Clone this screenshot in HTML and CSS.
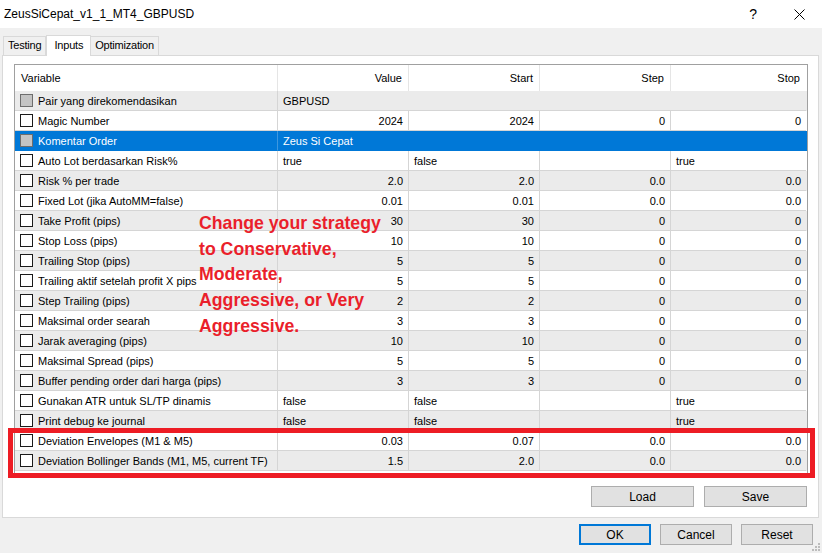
FILE: index.html
```html
<!DOCTYPE html>
<html lang="en">
<head>
  <meta charset="UTF-8" />
  <title>ZeusSiCepat_v1_1_MT4_GBPUSD</title>
  <link rel="stylesheet" href="styles.css">
</head>
<body>

  <div class="titlebar">
    <span class="title">ZeusSiCepat_v1_1_MT4_GBPUSD</span>
    <span class="help">?</span>
    <span class="close">
      <svg width="11" height="11" viewBox="0 0 11 11"><path d="M0.5 0.5 L10.5 10.5 M10.5 0.5 L0.5 10.5" stroke="#000" stroke-width="1" fill="none"/></svg>
    </span>
  </div>

  <div class="tabs">
    <div class="tab">Testing</div>
    <div class="tab active">Inputs</div>
    <div class="tab">Optimization</div>
  </div>

  <div class="panel">
    <div class="list">
      <div class="row head">
        <div class="cell">Variable</div>
        <div class="cell num">Value</div>
        <div class="cell num">Start</div>
        <div class="cell num">Step</div>
        <div class="cell num">Stop</div>
      </div>

      <div class="row alt">
        <div class="cell name"><span class="check off"></span>Pair yang direkomendasikan</div>
        <div class="cell span">GBPUSD</div>
      </div>
      <div class="row">
        <div class="cell name"><span class="check"></span>Magic Number</div>
        <div class="cell num">2024</div><div class="cell num">2024</div><div class="cell num">0</div><div class="cell num">0</div>
      </div>
      <div class="row selected">
        <div class="cell name"><span class="check off"></span>Komentar Order</div>
        <div class="cell span">Zeus Si Cepat</div>
      </div>
      <div class="row">
        <div class="cell name"><span class="check"></span>Auto Lot berdasarkan Risk%</div>
        <div class="cell">true</div><div class="cell">false</div><div class="cell"></div><div class="cell">true</div>
      </div>
      <div class="row alt">
        <div class="cell name"><span class="check"></span>Risk % per trade</div>
        <div class="cell num">2.0</div><div class="cell num">2.0</div><div class="cell num">0.0</div><div class="cell num">0.0</div>
      </div>
      <div class="row">
        <div class="cell name"><span class="check"></span>Fixed Lot (jika AutoMM=false)</div>
        <div class="cell num">0.01</div><div class="cell num">0.01</div><div class="cell num">0.0</div><div class="cell num">0.0</div>
      </div>
      <div class="row alt">
        <div class="cell name"><span class="check"></span>Take Profit (pips)</div>
        <div class="cell num">30</div><div class="cell num">30</div><div class="cell num">0</div><div class="cell num">0</div>
      </div>
      <div class="row">
        <div class="cell name"><span class="check"></span>Stop Loss (pips)</div>
        <div class="cell num">10</div><div class="cell num">10</div><div class="cell num">0</div><div class="cell num">0</div>
      </div>
      <div class="row alt">
        <div class="cell name"><span class="check"></span>Trailing Stop (pips)</div>
        <div class="cell num">5</div><div class="cell num">5</div><div class="cell num">0</div><div class="cell num">0</div>
      </div>
      <div class="row">
        <div class="cell name"><span class="check"></span>Trailing aktif setelah profit X pips</div>
        <div class="cell num">5</div><div class="cell num">5</div><div class="cell num">0</div><div class="cell num">0</div>
      </div>
      <div class="row alt">
        <div class="cell name"><span class="check"></span>Step Trailing (pips)</div>
        <div class="cell num">2</div><div class="cell num">2</div><div class="cell num">0</div><div class="cell num">0</div>
      </div>
      <div class="row">
        <div class="cell name"><span class="check"></span>Maksimal order searah</div>
        <div class="cell num">3</div><div class="cell num">3</div><div class="cell num">0</div><div class="cell num">0</div>
      </div>
      <div class="row alt">
        <div class="cell name"><span class="check"></span>Jarak averaging (pips)</div>
        <div class="cell num">10</div><div class="cell num">10</div><div class="cell num">0</div><div class="cell num">0</div>
      </div>
      <div class="row">
        <div class="cell name"><span class="check"></span>Maksimal Spread (pips)</div>
        <div class="cell num">5</div><div class="cell num">5</div><div class="cell num">0</div><div class="cell num">0</div>
      </div>
      <div class="row alt">
        <div class="cell name"><span class="check"></span>Buffer pending order dari harga (pips)</div>
        <div class="cell num">3</div><div class="cell num">3</div><div class="cell num">0</div><div class="cell num">0</div>
      </div>
      <div class="row">
        <div class="cell name"><span class="check"></span>Gunakan ATR untuk SL/TP dinamis</div>
        <div class="cell">false</div><div class="cell">false</div><div class="cell"></div><div class="cell">true</div>
      </div>
      <div class="row alt">
        <div class="cell name"><span class="check"></span>Print debug ke journal</div>
        <div class="cell">false</div><div class="cell">false</div><div class="cell"></div><div class="cell">true</div>
      </div>
      <div class="row">
        <div class="cell name"><span class="check"></span>Deviation Envelopes (M1 &amp; M5)</div>
        <div class="cell num">0.03</div><div class="cell num">0.07</div><div class="cell num">0.0</div><div class="cell num">0.0</div>
      </div>
      <div class="row alt">
        <div class="cell name"><span class="check"></span>Deviation Bollinger Bands (M1, M5, current TF)</div>
        <div class="cell num">1.5</div><div class="cell num">2.0</div><div class="cell num">0.0</div><div class="cell num">0.0</div>
      </div>
    </div>

    <div class="file-buttons">
      <button class="btn wide">Load</button>
      <button class="btn wide">Save</button>
    </div>
  </div>

  <div class="dialog-buttons">
    <button class="btn default">OK</button>
    <button class="btn">Cancel</button>
    <button class="btn">Reset</button>
  </div>

  <!-- annotation drawn over the screenshot -->
  <div class="note">Change your strategy<br>to Conservative,<br>Moderate,<br>Aggressive, or Very<br>Aggressive.</div>
  <div class="highlight"></div>

  <svg class="grip" width="8" height="8" viewBox="0 0 8 8">
    <rect x="6" y="0" width="2" height="2" fill="#bcbcbc"/>
    <rect x="3" y="3" width="2" height="2" fill="#bcbcbc"/>
    <rect x="6" y="3" width="2" height="2" fill="#bcbcbc"/>
    <rect x="0" y="6" width="2" height="2" fill="#bcbcbc"/>
    <rect x="3" y="6" width="2" height="2" fill="#bcbcbc"/>
    <rect x="6" y="6" width="2" height="2" fill="#bcbcbc"/>
  </svg>

</body>
</html>
```

FILE: styles.css
```css
* {
  margin: 0;
  padding: 0;
  box-sizing: border-box;
}

html, body {
  width: 822px;
  height: 553px;
  overflow: hidden;
}

body {
  position: relative;
  background: #f0f0f0;
  font-family: 'Liberation Sans', Arial, sans-serif;
  font-size: 11px;
  color: #000;
}

/* title bar */
.titlebar {
  height: 28px;
  background: #fff;
  display: flex;
  align-items: center;
  padding-left: 4px;
}

.title {
  font-size: 12px;
  flex: 1;
}

.help {
  font-size: 14px;
  margin-right: 37px;
}

.close {
  display: flex;
  margin-right: 17px;
}

/* tabs */
.tabs {
  height: 27px;
  display: flex;
  align-items: flex-end;
  padding-left: 3px;
}

.tab {
  height: 19px;
  padding: 0 4px;
  line-height: 17px;
  border: 1px solid #d9d9d9;
  border-bottom: none;
  background: #f0f0f0;
  font-size: 11px;
  letter-spacing: -0.2px;
}

.tab + .tab {
  border-left: none;
}

.tab.active {
  height: 21px;
  background: #fff;
  border-left: 1px solid #d9d9d9;
  margin-bottom: -1px;
  position: relative;
  z-index: 1;
  padding: 1px 7px 0;
}

.tab.active + .tab {
  border-left: none;
}

/* main panel */
.panel {
  margin-left: 2px;
  width: 817px;
  height: 463px;
  background: #fff;
  border: 1px solid #d9d9d9;
  padding: 8px 0 0 11px;
}

.list {
  width: 794px;
  height: 411px;
  border: 1px solid #a0a0a0;
  border-bottom: none;
  background: #fff;
}

.row {
  display: grid;
  grid-template-columns: 263px 131px 131px 131px 135px;
  height: 20px;
}

.row.alt {
  background: #ebebeb;
}

.row.selected {
  background: #0078d7;
  color: #fff;
}

.row.head {
  height: 26px;
}

.cell {
  border-right: 1px solid #d5d5d5;
  border-bottom: 1px solid #d5d5d5;
  padding: 0 5px;
  display: flex;
  align-items: center;
  white-space: nowrap;
  overflow: hidden;
}

.cell:last-child {
  border-right: none;
}

.row.head .cell {
  border-right-color: #e5e5e5;
  border-bottom: none;
  padding: 0 6px;
}

.cell.num {
  justify-content: flex-end;
}

.cell.span {
  grid-column: 2 / 6;
  border-right: none;
}

.row.selected .cell {
  border-bottom-color: #0078d7;
  border-right-color: #3d97df;
}

.cell.name {
  padding-left: 5px;
}

.check {
  width: 13px;
  height: 13px;
  border: 1px solid #1a1a1a;
  background: #fff;
  margin-right: 5px;
  flex: none;
}

.check.off {
  background: #c4c4c4;
  border-color: #6d6d6d;
}

/* buttons */
.file-buttons {
  display: flex;
  justify-content: flex-end;
  gap: 10px;
  margin-top: 11px;
  padding-right: 11px;
}

.dialog-buttons {
  display: flex;
  justify-content: flex-end;
  gap: 9px;
  margin-top: 6px;
  padding-right: 9px;
}

.btn {
  width: 72px;
  height: 21px;
  border: 1px solid #adadad;
  background: #e1e1e1;
  font-family: 'Liberation Sans', Arial, sans-serif;
  font-size: 12px;
  color: #000;
}

.btn.wide {
  width: 103px;
}

.btn.default {
  border: 2px solid #0078d7;
}

/* red annotation layer */
.note {
  position: absolute;
  left: 199px;
  top: 211px;
  font-family: 'Liberation Sans', Arial, sans-serif;
  font-weight: bold;
  font-size: 17.7px;
  line-height: 25.7px;
  color: #ea1f2b;
}

.highlight {
  position: absolute;
  left: 8px;
  top: 428px;
  width: 807px;
  height: 50px;
  border: 5px solid #ed1c24;
}

.grip {
  position: absolute;
  right: 2px;
  bottom: 2px;
}
```
